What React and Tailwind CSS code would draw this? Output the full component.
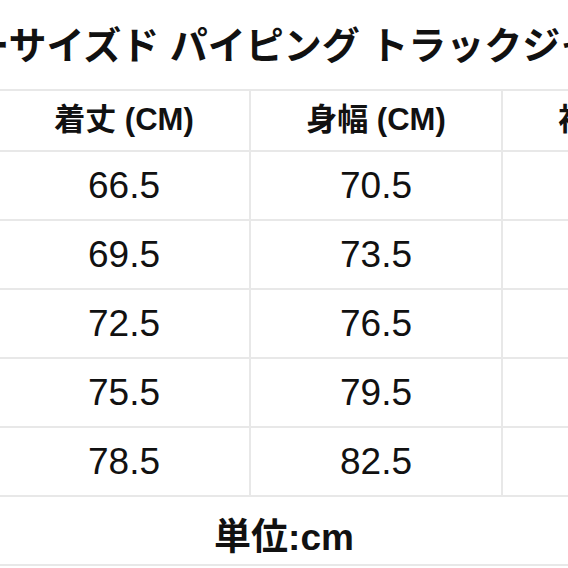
const COLUMNS = ['着丈 (CM)', '身幅 (CM)', '袖丈 (CM)']

const ROWS = [
  ['66.5', '70.5', '58.5'],
  ['69.5', '73.5', '60'],
  ['72.5', '76.5', '61.5'],
  ['75.5', '79.5', '63'],
  ['78.5', '82.5', '64.5'],
]

const font = { fontFamily: '"Liberation Sans", "Noto Sans CJK JP", sans-serif' }

export default function App() {
  return (
    <div className="w-[568px] h-[568px] overflow-hidden bg-white text-[#111]" style={font}>
      {/* タイトル */}
      <div className="h-[89px] flex justify-center items-center pt-[3px]">
        <div className="whitespace-nowrap text-[38px] font-bold leading-none">
          オーバーサイズド パイピング トラックジャケット
        </div>
      </div>

      {/* サイズ表 */}
      <div className="ml-[-3px] w-max bg-[#e8e8e8] p-[2px] grid grid-cols-[250px_250px_250px] gap-[2px]">
        {COLUMNS.map((c) => (
          <div key={c} className="h-[59px] bg-white flex items-center justify-center text-[31px] font-bold">
            {c}
          </div>
        ))}
        {ROWS.map((row, i) =>
          row.map((v, j) => (
            <div key={`${i}-${j}`} className="h-[67px] bg-white flex items-center justify-center text-[37px]">
              {v}
            </div>
          ))
        )}
      </div>

      {/* 単位 */}
      <div className="h-[69px] border-b-2 border-[#e8e8e8] flex items-center justify-center pt-[14px]">
        <span className="text-[37px] font-bold leading-none">単位:cm</span>
      </div>
    </div>
  )
}
